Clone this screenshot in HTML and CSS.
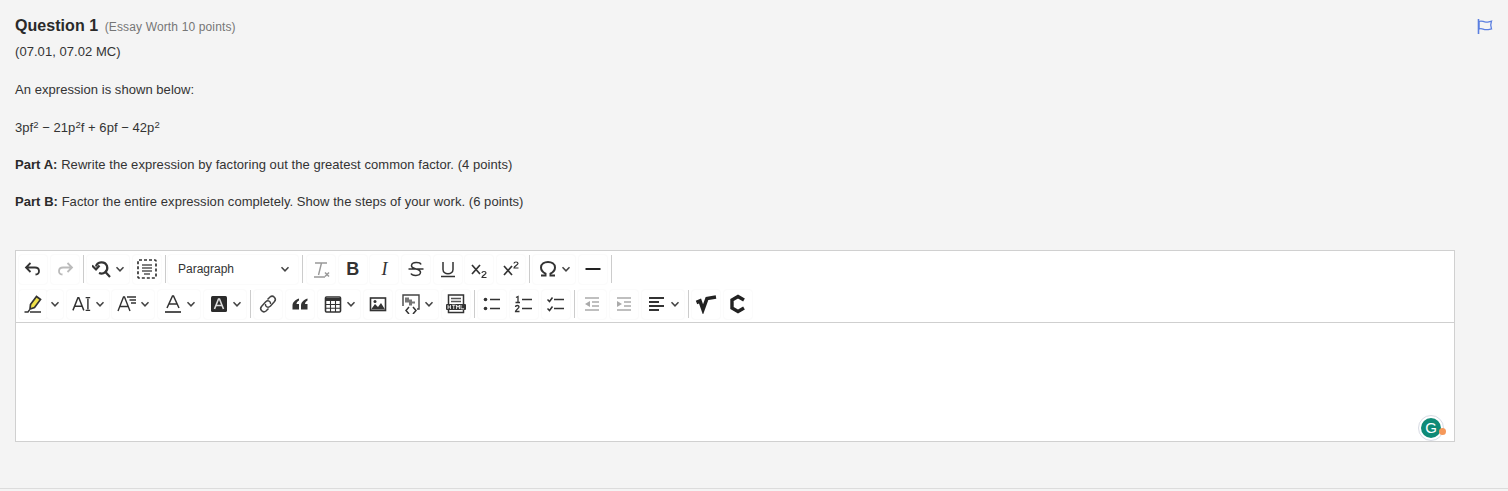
FILE: index.html
```html
<!DOCTYPE html>
<html lang="en">
<head>
    <meta charset="UTF-8">
    <meta name="viewport" content="width=device-width, initial-scale=1.0">
    <title>Question 1</title>
    <link rel="stylesheet" href="styles.css">
</head>
<body>
    <svg class="sprites" width="0" height="0" aria-hidden="true">
        <symbol id="caret" viewBox="0 0 10 10"><path d="M1.5 3.2 5 6.8l3.5-3.6" fill="none" stroke="#444" stroke-width="1.5"/></symbol>
    </svg>
    <main class="question">
        <header class="question-head">
            <div>
                <h1 class="question-title">Question 1 <small>(Essay Worth 10 points)</small></h1>
                <p class="standards">(07.01, 07.02 MC)</p>
            </div>
            <svg class="flag" viewBox="0 0 16 15" width="16" height="15"><path d="M1.5 0v15" stroke="#5b7fe0" stroke-width="1.6"/><path d="M2 2.5c3-1.5 4 .6 7 .6 2.500 0 3.500-.6 5.500-1-.8 2-.8 5.500 0 7.800-2 .4-3 .7-5.500.7-3 0-4-1.800-7-.6z" fill="none" stroke="#5b7fe0" stroke-width="1.3"/></svg>
        </header>

        <p>An expression is shown below:</p>
        <p>3pf<sup>2</sup> &minus; 21p<sup>2</sup>f + 6pf &minus; 42p<sup>2</sup></p>
        <p><strong>Part A:</strong> Rewrite the expression by factoring out the greatest common factor. (4 points)</p>
        <p><strong>Part B:</strong> Factor the entire expression completely. Show the steps of your work. (6 points)</p>

        <section class="editor">
            <div class="toolbar">
                <div class="toolbar-row">
                    <button class="tool"><svg viewBox="0 0 20 20"><path d="M7.500 4 3 8.500 7.500 13M3.500 8.500H12c5 0 5.500 6.500.5 7" fill="none" stroke="#333" stroke-width="1.800"/></svg></button>
                    <button class="tool"><svg viewBox="0 0 20 20"><path d="M12.500 4 17 8.500 12.500 13M16.500 8.500H8c-5 0-5.500 6.500-.5 7" fill="none" stroke="#bbb" stroke-width="1.800"/></svg></button>
                    <span class="sep"></span>
                    <button class="tool tool-drop"><svg viewBox="0 0 20 20"><path d="M4 7.500C5 2.500 13 1.800 15 7c1.500 5-3.500 9-8 7" fill="none" stroke="#333" stroke-width="2.200"/><path d="m13 12.500 5 5.500M0 6.500l4 4 3.500-4" fill="none" stroke="#333" stroke-width="2.200"/></svg><svg class="caret"><use href="#caret"/></svg></button>
                    <button class="tool"><svg viewBox="0 0 20 20"><rect x="1" y="1" width="18" height="18" rx="1" fill="none" stroke="#333" stroke-width="1.700" stroke-dasharray="3 2"/><path d="M5 6h10M5 9h10M5 12h10M7 15h6" stroke="#555" stroke-width="1.300"/></svg></button>
                    <span class="sep"></span>
                    <button class="tool heading-select"><span>Paragraph</span><svg class="caret"><use href="#caret"/></svg></button>
                    <span class="sep"></span>
                    <div class="tool-group">
                        <button class="tool"><svg viewBox="0 0 20 20"><path d="M4 4h12M10.500 4 7.500 16M3 18h11" fill="none" stroke="#999" stroke-width="1.400"/><path d="m14 13.500 4 4m0-4-4 4" stroke="#999" stroke-width="1.500"/></svg></button>
                        <button class="tool glyph glyph-b">B</button>
                        <button class="tool glyph glyph-i">I</button>
                        <button class="tool"><svg viewBox="0 0 20 20"><path d="M15 5.500C14 3 6 2.500 5.500 6.500 5 11 15 9 14.500 13.500 14 17.500 6 17 5 14.500M2.500 10h15" fill="none" stroke="#333" stroke-width="1.500"/></svg></button>
                        <button class="tool"><svg viewBox="0 0 20 20"><path d="M5 3v7.500c0 5.500 10 5.500 10 0V3M3 17.500h14" fill="none" stroke="#333" stroke-width="1.500"/></svg></button>
                        <button class="tool"><svg viewBox="0 0 20 20"><path d="m3 6 8 9m0-9-8 9" stroke="#333" stroke-width="1.700"/><path d="M13 14c0-2 4-2 4 0 0 1.400-4 2.800-4 4.500h4.500" fill="none" stroke="#333" stroke-width="1.200"/></svg></button>
                        <button class="tool"><svg viewBox="0 0 20 20"><path d="m3 7 8 9m0-9-8 9" stroke="#333" stroke-width="1.700"/><path d="M13 4.500c0-2 4-2 4 0 0 1.400-4 2.800-4 4.500h4.500" fill="none" stroke="#333" stroke-width="1.200"/></svg></button>
                    </div>
                    <span class="sep"></span>
                    <button class="tool tool-drop"><svg viewBox="0 0 20 20"><path d="M3 16.500h4.500v-1.800C4.500 13 3 10.500 3 8.500c0-7.500 14-7.500 14 0 0 2-1.500 4.500-4.500 6.200v1.800H17" fill="none" stroke="#333" stroke-width="2"/></svg><svg class="caret"><use href="#caret"/></svg></button>
                    <button class="tool"><svg viewBox="0 0 20 20"><path d="M2.500 10h15" stroke="#222" stroke-width="2"/></svg></button>
                    <span class="sep"></span>
                </div>
                <div class="toolbar-row">
                    <button class="tool tool-split"><svg viewBox="0 0 20 20"><path d="m7.500 10.500 6-8 4 3-6 8-4.500 1.500z" fill="#f0e14a" stroke="#333" stroke-width="1.700"/><path d="M1.500 18h3.500l1.500-2M7 18h11" stroke="#333" stroke-width="1.500" fill="none"/></svg></button>
                    <button class="tool tool-arrow"><svg class="caret"><use href="#caret"/></svg></button>
                    <button class="tool tool-drop"><svg viewBox="0 0 22 20"><path d="m1 17 5.500-14h1L13 17M3 12.500h8" fill="none" stroke="#333" stroke-width="1.600"/><path d="M17.500 4v12" stroke="#333" stroke-width="1.600"/><path d="M15 3h5M15 17h5" stroke="#333" stroke-width="1.600"/></svg><svg class="caret"><use href="#caret"/></svg></button>
                    <button class="tool tool-drop tool-tight"><svg viewBox="0 0 20 20"><path d="M1 17 6.500 3h1L13 17M3 12.500h8M10 3h9M12.500 6H19M14 9h5" fill="none" stroke="#333" stroke-width="1.400"/></svg><svg class="caret"><use href="#caret"/></svg></button>
                    <button class="tool tool-drop"><svg viewBox="0 0 20 20"><path d="m4 14 5.500-12h1L16 14M6 10h8" fill="none" stroke="#333" stroke-width="1.500"/><path d="M2 18h16" stroke="#333" stroke-width="1.700"/></svg><svg class="caret"><use href="#caret"/></svg></button>
                    <button class="tool tool-drop"><svg viewBox="0 0 20 20"><rect x="2" y="2" width="16" height="16" rx="1.500" fill="#2b2b2b"/><path d="m5.500 15 4-10h1l4 10M7 11.500h6" fill="none" stroke="#ddd" stroke-width="1.600"/></svg><svg class="caret"><use href="#caret"/></svg></button>
                    <span class="sep"></span>
                    <button class="tool"><svg viewBox="0 0 20 20"><path d="M9.500 5.500 12 3c3-2.500 7 1.500 4.500 4.500l-4 4.500c-2.500 2.500-5.500.5-5-2" fill="none" stroke="#444" stroke-width="1.500"/><path d="M10.500 14.500 8 17c-3 2.500-7-1.500-4.500-4.500l4-4.500c2.500-2.500 5.500-.5 5 2" fill="none" stroke="#444" stroke-width="1.500"/></svg></button>
                    <button class="tool"><svg viewBox="0 0 20 20"><path d="M9 4.500C5 6 2.500 8.500 2.500 11.500v4H9V10H6.500c0-1.500 1-2.500 2.500-3.500zM17.500 4.500c-4 1.500-6.500 4-6.500 7v4h6.500V10H15c0-1.500 1-2.500 2.500-3.500z" fill="#333"/></svg></button>
                    <button class="tool tool-drop"><svg viewBox="0 0 20 20"><rect x="2.500" y="3" width="15" height="15" rx="1" fill="none" stroke="#333" stroke-width="1.600"/><path d="M2.500 4h15v3h-15z" fill="#333"/><path d="M2.500 10.500h15M2.500 14.300h15M7.500 7v11M12.500 7v11" stroke="#333" stroke-width="1.100"/></svg><svg class="caret"><use href="#caret"/></svg></button>
                    <button class="tool"><svg viewBox="0 0 20 20"><rect x="2.500" y="4" width="15" height="12.500" fill="none" stroke="#333" stroke-width="1.600"/><path d="M3 15.500 7 10l3 3 3-4 4 6.500z" fill="#333"/><circle cx="7" cy="7.500" r="1.500" fill="#333"/></svg></button>
                    <button class="tool tool-drop"><svg viewBox="0 0 20 20"><path d="M2 12V1h16v14h-2" fill="none" stroke="#444" stroke-width="1.400"/><path d="M4 3.500h4v2h3v2h3v2h-3v2H8v-3H4z" fill="#777"/><path d="m8 13-3 3.500 3 3.500m4-7 3 3.500-3 3.500" fill="none" stroke="#333" stroke-width="1.500"/></svg><svg class="caret"><use href="#caret"/></svg></button>
                    <button class="tool"><svg viewBox="0 0 20 20"><rect x="2.500" y="1" width="15" height="17.500" fill="#fff" stroke="#333" stroke-width="1.500"/><path d="M5 4.500h10M5 7.500h10" stroke="#555" stroke-width="1.500"/><rect x="0" y="10" width="20" height="6" rx="1" fill="#333"/><path d="M2 11v4M4.500 11v4M2 13h2.500M6 11.200h3.500M7.700 11v4M10.500 15v-4l1.500 2.300 1.500-2.300v4M15 11v3.800h3" fill="none" stroke="#fff" stroke-width=".8"/></svg></button>
                    <span class="sep"></span>
                    <button class="tool"><svg viewBox="0 0 20 20"><circle cx="3.500" cy="5.500" r="1.800" fill="#333"/><circle cx="3.500" cy="14.500" r="1.800" fill="#333"/><path d="M8 5.500h10M8 14.500h10" stroke="#333" stroke-width="1.700"/></svg></button>
                    <button class="tool"><svg viewBox="0 0 20 20"><path d="M2 3.500l2-1V8M1.500 8.500h4.500M1.500 13c0-2 3.500-2 3.500 0 0 1.500-3.500 2.500-3.500 4.500H5.500" fill="none" stroke="#333" stroke-width="1.300"/><path d="M8 5.500h10M8 14.500h10" stroke="#333" stroke-width="1.700"/></svg></button>
                    <button class="tool"><svg viewBox="0 0 20 20"><path d="m1.500 5.500 2 2 3-4M1.500 14.500l2 2 3-4" fill="none" stroke="#333" stroke-width="1.500"/><path d="M8 5.500h10M8 14.500h10" stroke="#333" stroke-width="1.700"/></svg></button>
                    <span class="sep"></span>
                    <button class="tool"><svg viewBox="0 0 20 20"><path d="M3 4h14M10 8h7M10 12h7M3 16h14" stroke="#aaa" stroke-width="1.600"/><path d="M8 7v6l-5-3z" fill="#aaa"/></svg></button>
                    <button class="tool"><svg viewBox="0 0 20 20"><path d="M3 4h14M10 8h7M10 12h7M3 16h14" stroke="#aaa" stroke-width="1.600"/><path d="M3 7v6l5-3z" fill="#aaa"/></svg></button>
                    <button class="tool tool-drop"><svg viewBox="0 0 20 20"><path d="M2 4h15M2 8h10M2 12h15M2 16h10" stroke="#333" stroke-width="1.800"/></svg><svg class="caret"><use href="#caret"/></svg></button>
                    <span class="sep"></span>
                    <button class="tool tool-math"><svg viewBox="0 0 22 20"><path d="m1.500 8.500 3.500-1.500 3 8.500L12 4.500l9-1.500" fill="none" stroke="#222" stroke-width="3.600"/></svg></button>
                    <button class="tool"><svg viewBox="0 0 20 20"><path d="M16 6 10 2.500 4 6v8l6 3.500 6-3.500" fill="none" stroke="#222" stroke-width="3.400"/></svg></button>
                </div>
            </div>
            <div class="content"></div>
            <div class="grammarly"><span class="grammarly-g">G</span><span class="grammarly-dot"></span></div>
        </section>
    </main>
    <footer class="page-end"></footer>
</body>
</html>
```

FILE: styles.css
```css
html, body {
    margin: 0;
    height: 491px;
    overflow: hidden;
}
body {
    background: #f4f4f4;
    color: #333;
    font-family: "Liberation Sans", Arial, sans-serif;
    font-size: 13px;
    line-height: 18px;
    letter-spacing: 0.05px;
}
.sprites {
    position: absolute;
}
.question {
    height: 488px;
    box-sizing: border-box;
    padding: 16px 15px 0;
}
.question-head {
    display: flex;
    justify-content: space-between;
    align-items: flex-start;
}
.question-title {
    margin: 0;
    font-size: 16px;
    line-height: 20px;
    font-weight: bold;
    color: #2a2a2a;
}
.question-title small {
    font-size: 12px;
    font-weight: normal;
    color: #767676;
    margin-left: 2px;
    letter-spacing: 0.14px;
}
.standards {
    margin: 6px 0 1px;
}
.flag {
    margin-top: 3px;
}
p {
    margin: 19.33px 0 0;
}
sup {
    font-size: 9.5px;
    line-height: 0;
    vertical-align: 4px;
}
strong {
    color: #2a2a2a;
}
.editor {
    position: relative;
    margin-top: 39px;
    width: 1438px;
    height: 190px;
    background: #fff;
    border: 1px solid #d0d0d0;
    display: flex;
    flex-direction: column;
}
.toolbar {
    height: 72px;
    box-sizing: border-box;
    padding: 3px 3px 0;
    border-bottom: 1px solid #cfcfcf;
}
.toolbar-row {
    display: flex;
    align-items: center;
    gap: 4px;
    height: 30px;
    margin-bottom: 5px;
}
.toolbar-row:last-child {
    margin-bottom: 0;
}
.tool-group {
    display: flex;
    gap: 3.7px;
    margin-left: 1px;
}
.tool {
    display: flex;
    align-items: center;
    justify-content: center;
    gap: 3px;
    width: 28px;
    height: 29px;
    padding: 0;
    border: 0;
    border-radius: 3px;
    background: #fff;
    box-shadow: 0 0 2px rgba(0,0,0,0.07);
    color: #333;
    font-family: "Liberation Sans", Arial, sans-serif;
    flex: none;
}
.tool svg {
    width: 20px;
    height: 20px;
    flex: none;
}
.tool .caret {
    width: 10px;
    height: 10px;
}
.tool-drop {
    width: 42px;
}
.tool-tight {
    margin-left: -1px;
}
.tool-split {
    margin-right: -4px;
}
.tool-arrow {
    width: 16px;
}
.tool-math svg {
    width: 22px;
}
.heading-select {
    width: 130px;
    margin-left: -1px;
    justify-content: space-between;
    padding: 0 8px 0 10px;
    box-sizing: border-box;
    font-size: 12px;
}
.sep {
    width: 1px;
    height: 28px;
    margin-right: -1px;
    background: #ccc;
    flex: none;
}
.glyph {
    font-size: 18px;
}
.glyph-b {
    font-weight: bold;
}
.glyph-i {
    font-family: "Liberation Serif", serif;
    font-style: italic;
}
.content {
    flex: 1;
}
.grammarly {
    position: absolute;
    right: 10px;
    bottom: 0;
    width: 26px;
    height: 26px;
    box-sizing: border-box;
    border: 1px solid #d8dbe4;
    border-radius: 50%;
    display: flex;
    align-items: center;
    justify-content: center;
}
.grammarly-g {
    width: 20px;
    height: 20px;
    border-radius: 50%;
    background: #0f8a76;
    color: #fff;
    font-size: 15px;
    line-height: 20px;
    text-align: center;
}
.grammarly-dot {
    position: absolute;
    right: -3px;
    top: 12px;
    width: 7px;
    height: 7px;
    border-radius: 50%;
    background: #f5985a;
}
.page-end {
    height: 1px;
    background: #dcdcdc;
}
```
